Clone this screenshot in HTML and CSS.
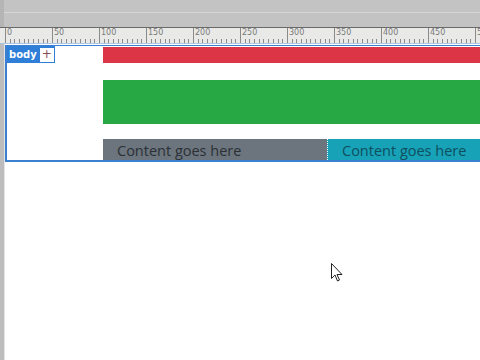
FILE: index.html
```html
<!DOCTYPE html>
<html lang="en">
  <head>
    <meta charset="UTF-8" />
    <meta name="viewport" content="width=device-width, initial-scale=1.0" />
    <title>Layout editor</title>
    <link rel="stylesheet" href="styles.css">
  </head>
  <body>
    <div class="chrome">
      <div class="chrome-line"></div>
    </div>
    <div class="ruler">
      <span>0</span><span>50</span><span>100</span><span>150</span><span>200</span>
      <span>250</span><span>300</span><span>350</span><span>400</span><span>450</span><span>500</span>
    </div>
    <div class="stage">
      <div class="gutter"></div>
      <div class="canvas">
        <div class="frame">
          <div class="tag"><span class="tag-name">body</span><span class="tag-add">+</span></div>
          <div class="bar bar-red"></div>
          <div class="bar bar-green"></div>
          <div class="cols">
            <div class="col col-gray">Content goes here</div>
            <div class="col col-teal">Content goes here</div>
          </div>
        </div>
      </div>
      <svg class="cursor" width="12" height="19" viewBox="0 0 12 19">
        <path d="M0.5 0.5 L0.5 15.5 L4 12 L6.5 18 L8.5 17 L6 11.5 L11 11.5 Z" fill="#fff" stroke="#222" stroke-width="1" stroke-linejoin="round" />
      </svg>
    </div>
  </body>
</html>
```

FILE: styles.css
```css
/* editor canvas */
body {
  margin: 0;
  padding: 0;
  width: 480px;
  height: 360px;
  overflow: hidden;
  background: #ffffff;
  font-family: "Open Sans", "Noto Sans", sans-serif;
}

.chrome {
  height: 27px;
  background: #c3c3c3;
  box-sizing: border-box;
  padding-top: 12px;
  border-left: 4px solid #b5b5b5;
}

.chrome-line {
  height: 1px;
  background: #d6d6d6;
}

.ruler {
  display: flex;
  height: 17px;
  box-sizing: border-box;
  padding-left: 5px;
  border-top: 1px solid #6a6a6a;
  border-bottom: 1px solid #a9c6e6;
  background:
    repeating-linear-gradient(90deg, #8a8a8a 0 1px, transparent 1px 4.7px) 5px 100% / 100% 4px no-repeat,
    #e9e9e7;
  overflow: hidden;
}

.ruler span {
  flex: 0 0 47px;
  box-sizing: border-box;
  padding-left: 1px;
  border-left: 1px solid #8a8a8a;
  font-family: "DejaVu Sans", sans-serif;
  font-size: 8px;
  line-height: 10px;
  color: #7a7a7a;
  height: 15px;
}

.stage {
  position: relative;
  display: flex;
  height: 316px;
}

.gutter {
  flex: 0 0 4px;
  background: #bdbdbd;
  border-right: 1px solid #e4e4e4;
}

.canvas {
  flex: 1;
  overflow: hidden;
}

.frame {
  position: relative;
  width: 560px;
  margin-top: 1px;
  padding: 0 0 0 96px;
  border: 2px solid #3b7fd1;
  border-top-width: 1px;
}

.tag {
  position: absolute;
  top: 0;
  left: 0;
  display: flex;
  align-items: center;
  height: 17px;
  padding: 0 1px 0 1px;
  background: #2f7fd8;
}

.tag-name {
  padding: 0 3px 0 1px;
  font-family: "DejaVu Sans", sans-serif;
  font-size: 10px;
  font-weight: bold;
  color: #ffffff;
}

.tag-add {
  width: 14px;
  height: 14px;
  line-height: 13px;
  text-align: center;
  background: #ffffff;
  color: #8a4a55;
  font-family: "DejaVu Sans", sans-serif;
  font-size: 12px;
}

.bar {
  width: 100%;
}

.bar-red {
  height: 16px;
  margin: 1px 0 17px;
  background: #dc3545;
}

.bar-green {
  height: 44px;
  margin-bottom: 15px;
  background: #28a745;
}

.cols {
  display: flex;
  height: 21px;
}

.col {
  padding-left: 14px;
  font-size: 14.5px;
  line-height: 23px;
  color: #2a3036;
  white-space: nowrap;
}

.col-gray {
  flex: 0 0 224px;
  box-sizing: border-box;
  background: #6c757d;
}

.col-teal {
  flex: 1;
  border-left: 1px dotted #ffffff;
  background: #17a2b8;
  color: #0f4f5e;
}

.cursor {
  position: absolute;
  left: 331px;
  top: 219px;
}
```
